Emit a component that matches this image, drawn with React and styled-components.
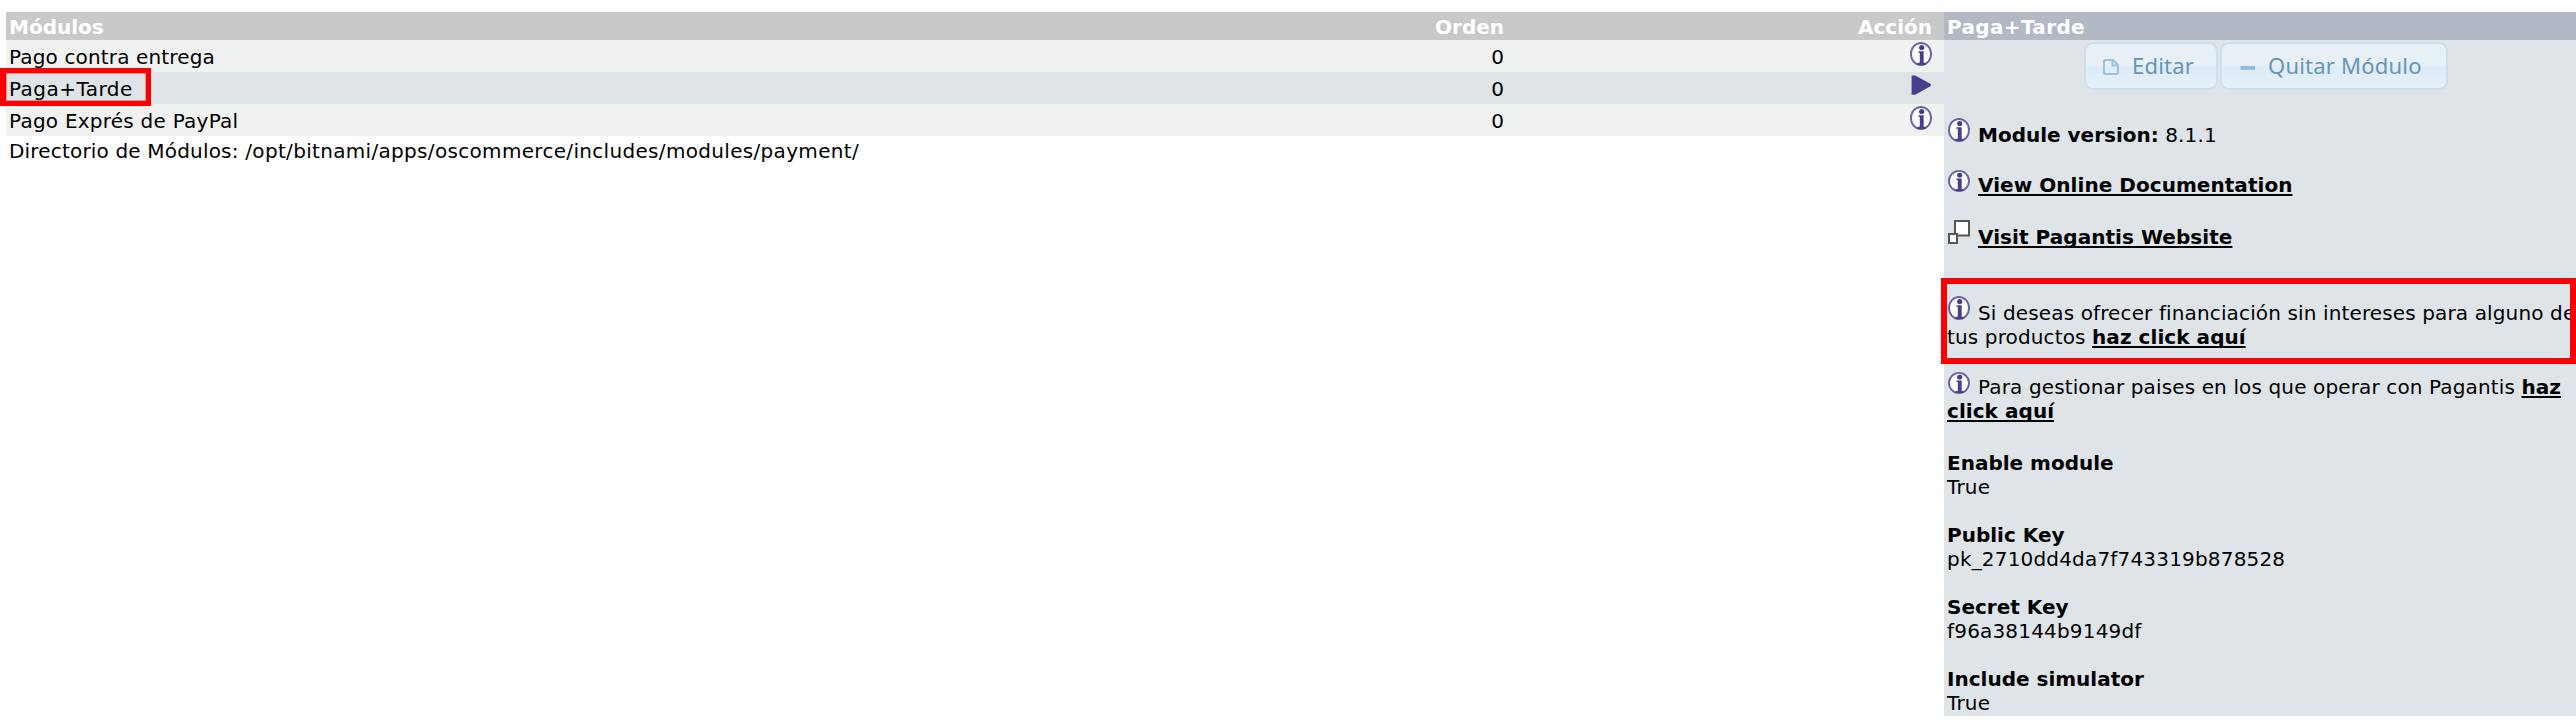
import React from 'react';
import styled, { createGlobalStyle } from 'styled-components';

const Global = createGlobalStyle`
  body { margin: 0; background: #fff; }
  * { box-sizing: border-box; }
`;

const Page = styled.main`
  display: flex;
  align-items: flex-start;
  height: 728px;
  padding: 12px 0 0 6px;
  overflow: hidden;
  font: 20px/24px Verdana, "DejaVu Sans", sans-serif;
  color: #000;
`;

const List = styled.section`
  flex: none;
  width: 1938px;
`;

const Row = styled.div`
  display: grid;
  grid-template-columns: 1061px 434px 1fr;
  align-items: start;
  height: ${(p) => (p.$head ? 28 : 32)}px;
  padding: ${(p) => (p.$head ? 3 : 5)}px 12px 0 3px;
  background: ${(p) => (p.$head ? '#c9c9c9' : p.$active ? '#dee4e8' : '#f0f1f1')};
  color: ${(p) => (p.$head ? '#fff' : '#000')};
  font-weight: ${(p) => (p.$head ? 'bold' : 'normal')};
`;

const Cell = styled.div`
  display: flex;
  justify-content: ${(p) => (p.$right ? 'flex-end' : 'flex-start')};
  white-space: nowrap;

  svg { margin-top: -3px; }
`;

const Name = styled.span`
  position: relative;
  display: inline-block;
  letter-spacing: ${(p) => p.$tracking}px;
`;

const Mark = styled.i`
  position: absolute;
  left: -9px;
  top: -9px;
  width: 151px;
  height: 38px;
  border: 5px solid #fe0000;
  border-left-width: 6px;
  box-shadow: inset 0 0 0 1px rgba(254, 0, 0, 0.35);
`;

const Directory = styled.p`
  margin: 0;
  padding: 3px;
  letter-spacing: 0.32px;
`;

const DirectoryLabel = styled.span`
  letter-spacing: 0.18px;
`;

const Panel = styled.aside`
  flex: 1;
  height: 704px;
  background: #dee4e8;
`;

const PanelTitle = styled.header`
  height: 28px;
  padding: 3px 3px 0;
  background: #b3b8c5;
  color: #fff;
  font-weight: bold;
  letter-spacing: 0.35px;
`;

const Buttons = styled.div`
  display: flex;
  justify-content: center;
  gap: 2px;
  padding: 2px 0 33px 12px;
`;

const Button = styled.button`
  display: flex;
  align-items: center;
  gap: 13px;
  width: ${(p) => p.$width}px;
  height: 48px;
  padding: 0 0 2px 17px;
  border: 2px solid #cddfeb;
  border-radius: 9px;
  background: linear-gradient(#e6f0f6 0 48%, #deebf7 54%, #e6f0f8);
  color: #6796b8;
  font: 22px/26px "Lucida Grande", "Noto Sans", sans-serif;
  letter-spacing: 0.22px;
  white-space: nowrap;

  svg { margin-top: 4px; }
`;

const Note = styled.p`
  position: relative;
  margin: 0 0 ${(p) => p.$gap}px;
  padding-left: 3px;
  letter-spacing: 0.13px;
  white-space: nowrap;
`;

const Strong = styled.b`
  letter-spacing: 0;
`;

const IconSlot = styled.span`
  display: inline-block;
  width: 22px;
  margin: -8px 8px 0 1px;
  vertical-align: baseline;

  svg { display: block; }
`;

const Link = styled.a`
  font-weight: bold;
  letter-spacing: 0.05px;
  text-decoration: underline;
  text-decoration-thickness: 2px;
  text-underline-offset: 2px;
  text-decoration-skip-ink: none;
`;

const Outline = styled.i`
  position: absolute;
  left: -3px;
  top: -23px;
  width: 635px;
  height: 86px;
  border: 6px solid #fe0000;
`;

const Setting = styled.dl`
  margin: 0 0 24px;
  padding-left: 3px;

  dt { font-weight: bold; }
  dd { margin: 0; letter-spacing: 0.18px; }
`;

const InfoIcon = ({ height = 24 }) => (
  <svg width="22" height={height} viewBox="0 0 22 24" preserveAspectRatio="none">
    <ellipse cx="11" cy="12" rx="10" ry="11" fill="#fff" stroke="#6a62a8" strokeWidth="1.9" />
    <circle cx="11.7" cy="5.6" r="2.6" fill="#473f8e" />
    <path d="M8.5 9.2h5.2v11.6h1.6V23H7.6v-2.2h2.2V10.8H8.5z" fill="#473f8e" />
  </svg>
);

const ArrowIcon = () => (
  <svg width="22" height="24" viewBox="0 0 22 24">
    <path d="M1.6 1.4h3.6L20.8 10v2L5.2 20.8H1.6z" fill="#473f8e" />
  </svg>
);

const PopupIcon = () => (
  <svg width="22" height="24" viewBox="0 0 22 24">
    <path d="M7 1h14v14.5H7z" fill="#fff" stroke="#555" strokeWidth="2" />
    <path d="M1 14h8v9H1z" fill="#fff" stroke="#555" strokeWidth="2" />
  </svg>
);

const PageIcon = () => (
  <svg width="16" height="16" viewBox="0 0 16 16">
    <path d="M2.5 1h7.5l5 5v7.5q0 1.5-1.5 1.5h-11Q1 15 1 13.5v-11Q1 1 2.5 1zM9.5 1v5.5H15" fill="none" stroke="#9bc2de" strokeWidth="2" />
  </svg>
);

const MinusIcon = () => (
  <svg width="16" height="16" viewBox="0 0 16 16">
    <path d="M1.5 7H16v3.8H1.5z" fill="#8fbadd" />
  </svg>
);

const modules = [
  { name: 'Pago contra entrega', order: 0, tracking: 0.15 },
  { name: 'Paga+Tarde', order: 0, active: true, tracking: 0.45 },
  { name: 'Pago Exprés de PayPal', order: 0, tracking: 0.24 },
];

const settings = [
  ['Enable module', 'True'],
  ['Public Key', 'pk_2710dd4da7f743319b878528'],
  ['Secret Key', 'f96a38144b9149df'],
  ['Include simulator', 'True'],
];

export default function App() {
  return (
    <>
      <Global />
      <Page>
        <List>
          <Row $head>
            <Cell>Módulos</Cell>
            <Cell $right>Orden</Cell>
            <Cell $right>Acción</Cell>
          </Row>
          {modules.map((m) => (
            <Row key={m.name} $active={m.active}>
              <Cell><Name $tracking={m.tracking}>{m.name}{m.active && <Mark />}</Name></Cell>
              <Cell $right>{m.order}</Cell>
              <Cell $right>{m.active ? <ArrowIcon /> : <InfoIcon />}</Cell>
            </Row>
          ))}
          <Directory>
            <DirectoryLabel>Directorio de Módulos:</DirectoryLabel> /opt/bitnami/apps/oscommerce/includes/modules/payment/
          </Directory>
        </List>
        <Panel>
          <PanelTitle>Paga+Tarde</PanelTitle>
          <Buttons>
            <Button $width={134}><PageIcon />Editar</Button>
            <Button $width={228}><MinusIcon />Quitar Módulo</Button>
          </Buttons>
          <Note $gap={26}><IconSlot><InfoIcon /></IconSlot><Strong>Module version:</Strong> 8.1.1</Note>
          <Note $gap={28}><IconSlot><InfoIcon height={22} /></IconSlot><Link>View Online Documentation</Link></Note>
          <Note $gap={52}><IconSlot><PopupIcon /></IconSlot><Link>Visit Pagantis Website</Link></Note>
          <Note $gap={26}>
            <IconSlot><InfoIcon /></IconSlot>Si deseas ofrecer financiación sin intereses para alguno de<br />
            tus productos <Link>haz click aquí</Link>
            <Outline />
          </Note>
          <Note $gap={28}>
            <IconSlot><InfoIcon height={22} /></IconSlot>Para gestionar paises en los que operar con Pagantis <Link>haz<br />click aquí</Link>
          </Note>
          {settings.map(([label, value]) => (
            <Setting key={label}><dt>{label}</dt><dd>{value}</dd></Setting>
          ))}
        </Panel>
      </Page>
    </>
  );
}
